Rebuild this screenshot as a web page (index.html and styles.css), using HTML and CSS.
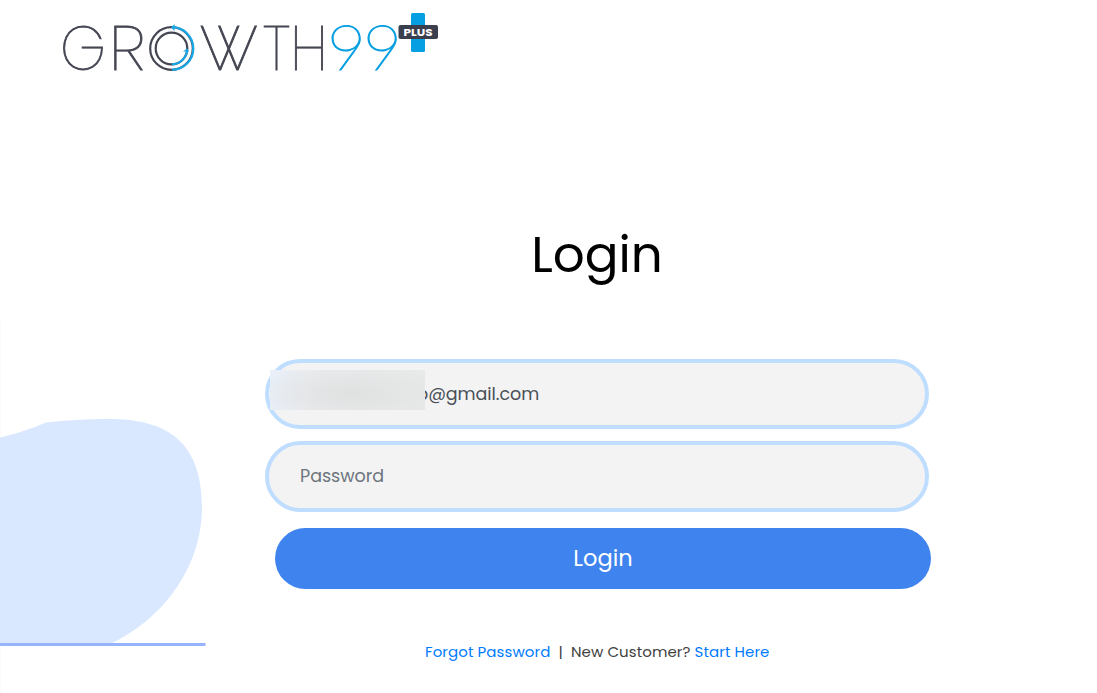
FILE: index.html
```html
<!DOCTYPE html>
<html lang="en">
<head>
<meta charset="utf-8">
<title>Login</title>
<link rel="stylesheet" href="styles.css">
</head>
<body>
<div class="page">
  <svg class="blob" viewBox="0 0 210 380" aria-hidden="true">
    <path d="M0 0V380" stroke="#f8f8fa" stroke-width="1"/>
    <path d="M0 117.500Q24 112 46 102.500Q75 99 105 99C164 98 202 119 202 187C202 248 162 300 110 324H0Z" fill="#d9e8ff"/>
    <path d="M0 324.500H205.500" stroke="#96b4fc" stroke-width="3"/>
  </svg>
  <header class="header">
    <svg class="logo" viewBox="0 0 390 70" role="img" aria-label="Growth99 Plus">
      <g class="letters">
        <text x="4" y="64" textLength="46" lengthAdjust="spacingAndGlyphs">G</text>
        <text x="53" y="64" textLength="36" lengthAdjust="spacingAndGlyphs">R</text>
        <text x="143" y="64" textLength="42" lengthAdjust="spacingAndGlyphs">V</text>
        <text x="160.500" y="64" textLength="42" lengthAdjust="spacingAndGlyphs">V</text>
        <text x="207" y="64" textLength="27" lengthAdjust="spacingAndGlyphs">T</text>
        <text x="234.500" y="64" textLength="37" lengthAdjust="spacingAndGlyphs">H</text>
        <text class="nine" x="271" y="64" textLength="39" lengthAdjust="spacingAndGlyphs">9</text>
        <text class="nine" x="307" y="64" textLength="39" lengthAdjust="spacingAndGlyphs">9</text>
      </g>
      <g fill="none" stroke-width="2.200">
        <circle cx="115.500" cy="42.500" r="21.300" stroke="#444652"/>
        <circle cx="115.500" cy="42.500" r="15.800" stroke="#444652"/>
        <path d="M116 21.200A21.300 21.300 0 0 1 116 63.800M131.300 44A15.800 15.800 0 0 1 116 58.300" stroke="#16a8e8"/>
      </g>
      <path d="M115 21.500l3.500-3.500v7zM131 42.500l-4 3h6z" fill="#16a8e8"/>
      <rect x="355" y="7" width="14" height="39" rx="1.500" fill="#069fe1"/>
      <rect x="342.500" y="19" width="39.500" height="14" rx="2" fill="#3b3e4d"/>
      <text class="plus" x="347.500" y="30" textLength="29" lengthAdjust="spacingAndGlyphs">PLUS</text>
    </svg>
  </header>
  <main class="login">
    <h1 class="title"><span>Login</span></h1>
    <form class="form">
      <div class="email">
        <input class="field field-email" type="text" value="o@gmail.com" aria-label="Email">
        <span class="mask"></span>
      </div>
      <input class="field field-password" type="password" placeholder="Password">
      <button class="submit" type="button">Login</button>
    </form>
    <div class="links"><a class="forgot">Forgot Password</a><span class="bar">|</span><span class="new">New Customer?</span><a class="start">Start Here</a></div>
  </main>
</div>
</body>
</html>
```
FILE: styles.css
```css
* { box-sizing: border-box; }
body { margin: 0; background: #fff; font-family: Poppins, Inter, sans-serif; }
.page { position: relative; height: 693px; overflow: hidden; }
.blob { position: absolute; left: 0; top: 320px; width: 210px; height: 380px; }
.header { height: 76px; padding: 6px 0 0 56px; }
.logo { display: block; width: 390px; height: 70px; overflow: visible; }
.letters { font: 200 62px Poppins, Lato, sans-serif; fill: #444652; stroke: #444652; stroke-width: .9px; }
.letters .nine { font: 100 62px Lato, sans-serif; fill: #069fe1; stroke: #069fe1; stroke-width: 1.2px; }
.plus { font: 700 10.500px Poppins, "Open Sans", sans-serif; fill: #fff; }
.login { position: relative; width: 664px; margin-left: 265px; }
.title { margin: 0; padding-top: 148px; height: 283px; text-align: center; font-weight: 400; font-size: 50px; line-height: 62px; color: #000; }
.form { display: flex; flex-direction: column; }
.email { position: relative; height: 70px; margin-bottom: 12px; }
.field { display: block; width: 664px; height: 70px; padding: 0 31px; border: 4px solid #bfddff; border-radius: 35px; background: #f3f3f3; font: 400 17.500px Poppins, Inter, sans-serif; color: #495057; outline: none; }
.field-email { padding-left: 148px; letter-spacing: -.05px; }
.field-password { height: 71px; padding-bottom: 2px; border-radius: 36px; }
.field::placeholder { color: #6c757d; opacity: 1; }
.mask { position: absolute; left: 5px; top: 11px; width: 155px; height: 40px; background: radial-gradient(ellipse 100px 32px at 80px 24px, #dfe1e1 0, rgba(223,225,225,0) 100%), linear-gradient(90deg, #e9f0fa 0, #ebecee 28%, #e8e9e9 100%); }
.submit { width: 656px; height: 61px; margin: 16px 0 0 10px; padding: 0 0 2px; border: 0; border-radius: 31px; background: #3f83ee; color: #fff; font: 400 22.500px Poppins, Inter, sans-serif; }
.links { display: flex; margin: 53px 0 0 160px; font-size: 15px; letter-spacing: .09px; line-height: 20px; color: #414141; white-space: pre; }
.links a { color: #007bff; }
.bar { margin: 0 8px; }
.start { margin-left: 4px; }
```
